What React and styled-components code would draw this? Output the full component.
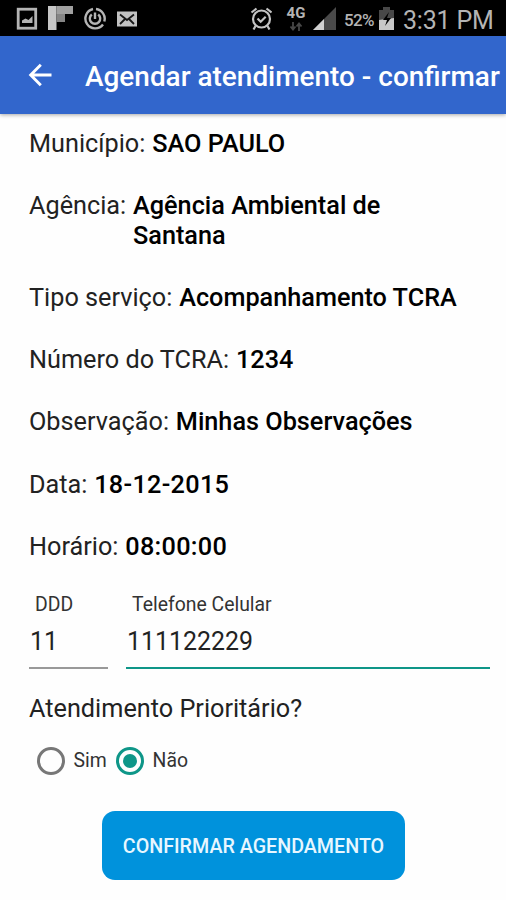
import React, { useState } from 'react';
import styled, { createGlobalStyle } from 'styled-components';

const GlobalStyle = createGlobalStyle`
  * {
    box-sizing: border-box;
  }

  body {
    margin: 0;
    background-color: #fefefe;
    color: #111;
    font-family: Roboto, 'Liberation Sans', sans-serif;
  }
`;

const Screen = styled.div`
  display: flex;
  flex-direction: column;
  height: 900px;
  overflow: hidden;
`;

const StatusBar = styled.div`
  display: flex;
  align-items: center;
  flex: none;
  height: 36px;
  padding: 0 12px 0 16px;
  background-color: #000;
  color: #b4b4b4;
  white-space: nowrap;
`;

const StatusIcon = styled.svg`
  display: block;
  flex: none;
  margin-left: ${(props) => props.$gap || 0}px;
`;

const Spacer = styled.div`
  flex: 1;
`;

const Network = styled.div`
  display: flex;
  flex-direction: column;
  align-items: center;
  width: 20px;
  height: 27px;
  margin-left: 14px;
  font-size: 15px;
  font-weight: 700;
  line-height: 17px;
`;

const BatteryLevel = styled.span`
  width: 31px;
  margin-left: 8px;
  padding-top: 3px;
  font-size: 17px;
  font-weight: 500;
  letter-spacing: -0.6px;
`;

const Clock = styled.span`
  width: 91px;
  margin-left: 9px;
  padding-top: 4px;
  font-size: 25px;
  letter-spacing: -0.2px;
`;

const AppBar = styled.header`
  display: flex;
  align-items: center;
  flex: none;
  height: 78px;
  padding-left: 28px;
  background-color: #3266cc;
  color: #fff;
  box-shadow: 0 1px 4px rgba(0, 0, 0, 0.35);
`;

const BackButton = styled.button`
  display: flex;
  width: 57px;
  padding: 0;
  border: none;
  background: none;
  color: inherit;
`;

const Title = styled.h1`
  margin: 3px 0 0;
  font-size: 27.95px;
  font-weight: 500;
  white-space: nowrap;
`;

const Content = styled.main`
  display: flex;
  flex-direction: column;
  padding: 14.6px 16px 0 29px;
`;

const Details = styled.dl`
  display: flex;
  flex-direction: column;
  gap: 32.2px;
  margin: 0;
  font-size: 25.25px;
  line-height: 30px;
`;

const DetailRow = styled.div`
  display: flex;
`;

const DetailLabel = styled.dt`
  flex: none;
  margin-right: 6.8px;
  color: #222;
`;

const DetailValue = styled.dd`
  max-width: 300px;
  margin: 0;
  font-weight: 500;
  letter-spacing: ${(props) => (props.$numeric ? '0.3px' : 'normal')};
  color: #000;
`;

const PhoneRow = styled.div`
  display: flex;
  gap: 18px;
  margin-top: 31.2px;
`;

const PhoneField = styled.div`
  width: ${(props) => props.$width}px;
`;

const FieldLabel = styled.label`
  display: block;
  padding-left: 6px;
  color: #333;
  font-size: 19.4px;
  line-height: 24px;
`;

const FieldInput = styled.input`
  display: block;
  width: 100%;
  height: 52px;
  padding: 0 0 1px 1px;
  border: none;
  border-bottom: 2px solid ${(props) => (props.$active ? '#0e9688' : '#999')};
  outline: none;
  background: none;
  color: #222;
  font-family: inherit;
  font-size: 24.9px;
`;

const Question = styled.p`
  margin: 24.6px 0 0;
  color: #222;
  font-size: 25.25px;
  line-height: 30px;
`;

const RadioGroup = styled.div`
  display: flex;
  height: 30px;
  margin-top: 22px;
  padding-left: 8px;
`;

const RadioOption = styled.button`
  display: flex;
  align-items: center;
  width: 79px;
  padding: 0;
  border: none;
  background: none;
  color: #333;
  font-family: inherit;
  font-size: 19.4px;
`;

const RadioCircle = styled.span`
  display: flex;
  align-items: center;
  justify-content: center;
  flex: none;
  width: 28px;
  height: 28px;
  margin-right: 8.6px;
  border: 3px solid ${(props) => (props.$checked ? '#0e9688' : '#777')};
  border-radius: 50%;

  &::after {
    content: '';
    width: 14px;
    height: 14px;
    border-radius: 50%;
    background-color: ${(props) => (props.$checked ? '#0e9688' : 'transparent')};
  }
`;

const ConfirmButton = styled.button`
  width: 303px;
  height: 69px;
  margin: 35.4px 0 0 73px;
  padding: 2px 0 0;
  border: none;
  border-radius: 13px;
  background-color: #0092dc;
  color: #e8f7ff;
  font-family: inherit;
  font-size: 19.7px;
  font-weight: 500;
  white-space: nowrap;
`;

const details = [
  { label: 'Município:', value: 'SAO PAULO' },
  { label: 'Agência:', value: 'Agência Ambiental de Santana' },
  { label: 'Tipo serviço:', value: 'Acompanhamento TCRA' },
  { label: 'Número do TCRA:', value: '1234' },
  { label: 'Observação:', value: 'Minhas Observações' },
  { label: 'Data:', value: '18-12-2015', numeric: true },
  { label: 'Horário:', value: '08:00:00', numeric: true },
];

const StatusIcons = () => (
  <StatusBar>
    <StatusIcon width="22" height="24" viewBox="0 0 22 24">
      <rect x="2.2" y="3.2" width="17.5" height="19" fill="none" stroke="#b4b4b4" strokeWidth="2.8" />
      <path d="M6 17V14.500l3.500-2 3 1.500 4-4v7z" fill="#b4b4b4" />
    </StatusIcon>
    <StatusIcon $gap={10} width="25" height="26" viewBox="0 0 25 26">
      <path d="M0 1h8.500v24H0z" fill="#c6c6c6" />
      <path d="M8.500 1H25v8H8.500z" fill="#a0a0a0" />
      <path d="M8.500 9H17v8H8.500z" fill="#858585" />
    </StatusIcon>
    <StatusIcon $gap={10} width="24" height="24" viewBox="0 0 24 24" fill="none" stroke="#b4b4b4" strokeWidth="2.4">
      <path d="M10 3A9.800 9.800 0 1 0 20 18.500M13 3A9.800 9.800 0 0 1 21.300 15.500" />
      <path d="M8.800 8.500A5.200 5.200 0 1 0 15.200 8.500M12 6.500v6.500" />
    </StatusIcon>
    <StatusIcon $gap={10} width="20" height="17" viewBox="0 0 20 17">
      <path d="M0 1.500h20v15H0z" fill="#c2c2c2" />
      <path d="M3 4.500l7 5.500 7-5.500M3 14l5-5M17 14l-5-5" fill="none" stroke="#181818" strokeWidth="1.8" />
    </StatusIcon>
    <Spacer />
    <StatusIcon width="22" height="24" viewBox="0 0 22 24" fill="none" stroke="#c4c4c4" strokeWidth="2.2">
      <circle cx="11.5" cy="13" r="8.5" />
      <path d="M7.500 12.500l3.200 3.200 5-5M1.500 6.500l5-4M21.500 6.500l-5-4M5.500 20L3.500 23.500M17.500 20L19.500 23.500" />
    </StatusIcon>
    <Network>
      4G
      <svg width="14" height="9" viewBox="0 0 14 9" fill="none" stroke="#484848" strokeWidth="1.8">
        <path d="M4 0v7M1.500 4.500L4 7.500l2.500-3M10 9V2M7.500 4.500L10 1.500l2.500 3" />
      </svg>
    </Network>
    <StatusIcon $gap={7} width="23" height="23" viewBox="0 0 23 23">
      <path d="M0 23L23 0v23z" fill="#4a4a4a" />
      <path d="M0 23L11 12v11z" fill="#d0d0d0" />
    </StatusIcon>
    <BatteryLevel>52%</BatteryLevel>
    <StatusIcon $gap={4} width="15" height="23" viewBox="0 0 15 23">
      <path d="M4 0h7v3h4v20H0V3h4z" fill="#484848" />
      <path d="M0 13l15-2v12H0z" fill="#c8c8c8" />
      <path d="M10 5L4 13h4l-2 6 6-8H8z" fill="#000" />
    </StatusIcon>
    <Clock>3:31 PM</Clock>
  </StatusBar>
);

const App = () => {
  const [ddd, setDdd] = useState('11');
  const [phone, setPhone] = useState('111122229');
  const [priority, setPriority] = useState('Não');

  return (
    <Screen>
      <GlobalStyle />
      <StatusIcons />
      <AppBar>
        <BackButton aria-label="Voltar">
          <svg width="24" height="24" viewBox="0 0 24 24" fill="none" stroke="currentColor" strokeWidth="2.9">
            <path d="M23.500 12H3M12.800 1.800L2.700 12l10.100 10.200" />
          </svg>
        </BackButton>
        <Title>Agendar atendimento - confirmar</Title>
      </AppBar>
      <Content>
        <Details>
          {details.map((item) => (
            <DetailRow key={item.label}>
              <DetailLabel>{item.label}</DetailLabel>
              <DetailValue $numeric={item.numeric}>{item.value}</DetailValue>
            </DetailRow>
          ))}
        </Details>
        <PhoneRow>
          <PhoneField $width={79}>
            <FieldLabel htmlFor="ddd">DDD</FieldLabel>
            <FieldInput id="ddd" value={ddd} onChange={(e) => setDdd(e.target.value)} />
          </PhoneField>
          <PhoneField $width={364}>
            <FieldLabel htmlFor="phone">Telefone Celular</FieldLabel>
            <FieldInput id="phone" $active value={phone} onChange={(e) => setPhone(e.target.value)} />
          </PhoneField>
        </PhoneRow>
        <Question>Atendimento Prioritário?</Question>
        <RadioGroup>
          {['Sim', 'Não'].map((option) => (
            <RadioOption key={option} onClick={() => setPriority(option)}>
              <RadioCircle $checked={priority === option} />
              {option}
            </RadioOption>
          ))}
        </RadioGroup>
        <ConfirmButton>CONFIRMAR AGENDAMENTO</ConfirmButton>
      </Content>
    </Screen>
  );
};

export default App;
